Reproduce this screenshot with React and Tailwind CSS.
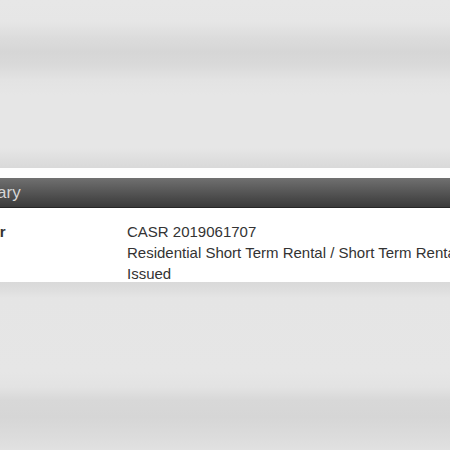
// Permit detail: summary section of a record, scrolled sideways inside a grey page
const fila = [
  ['Record Number', 'CASR 2019061707'],
  ['', 'Residential Short Term Rental / Short Term Rental'],
  ['', 'Issued'],
];

export default function App() {
  return (
    <div className="w-[450px] h-[450px] overflow-hidden flex flex-col font-['Liberation_Sans',Arial,sans-serif] text-[#333]">
      <div className="h-[168px] bg-[linear-gradient(to_bottom,#e7e7e7_0px,#e6e6e6_22px,#dcdcdc_38px,#d6d6d6_52px,#d9d9d9_64px,#e3e3e3_80px,#e6e6e6_95px,#e6e6e6_148px,#dedede_160px,#d9d9d9_168px)]" />
      <div className="h-[10px] bg-[#fdfdfd]" />

      <div className="-ml-[120px] w-[720px] bg-white">
        <div className="h-[30px] pl-[68px] flex items-center bg-[linear-gradient(to_bottom,#707070,#3a3a3a)] border-b border-[#262626] text-[17px] text-[#d6d6d6]">
          Summary
        </div>
        <div className="h-[74px] pt-[13px] overflow-hidden">
          {fila.map(([etiqueta, valor], i) => (
            <div key={i} className="grid grid-cols-[247px_1fr] text-[15px] leading-[21px]">
              <div className="pl-[13px] font-bold whitespace-nowrap">{etiqueta}</div>
              <div className="whitespace-nowrap">{valor}</div>
            </div>
          ))}
        </div>
      </div>

      <div className="flex-1 bg-[linear-gradient(to_bottom,#d9d9d9_0px,#dedede_8px,#e5e5e5_16px,#e6e6e6_90px,#e3e3e3_105px,#d8d8d8_118px,#d6d6d6_135px,#dcdcdc_155px,#e1e1e1_168px)]" />
    </div>
  );
}
